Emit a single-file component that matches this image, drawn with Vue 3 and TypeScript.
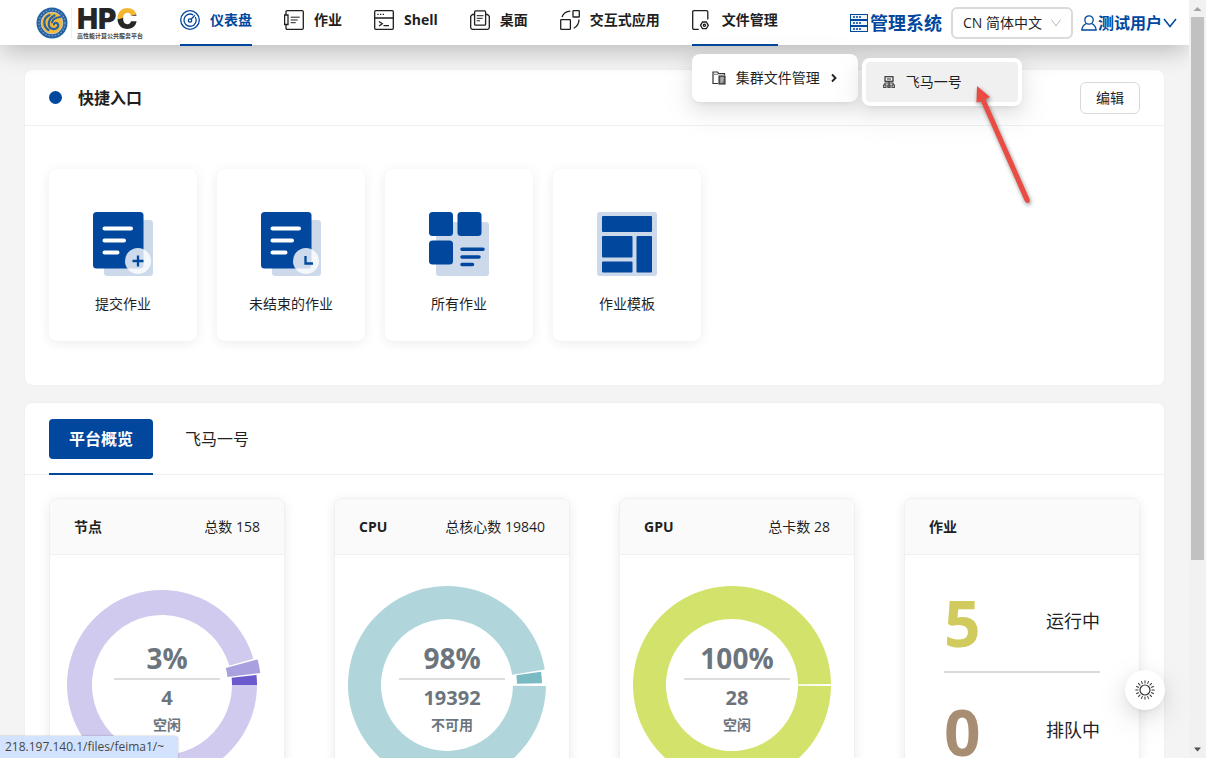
<script setup lang="ts">
import { ref } from 'vue'

interface Slice {
  from: number
  to: number
  inner: number
  outer: number
  color: string
}
interface ResourceCard {
  title: string
  total: string
  percent: string
  count: string
  state: string
  slices: Slice[]
}

const navItems = [
  { key: 'dashboard', label: '仪表盘', active: true },
  { key: 'job', label: '作业', active: false },
  { key: 'shell', label: 'Shell', active: false },
  { key: 'desktop', label: '桌面', active: false },
  { key: 'apps', label: '交互式应用', active: false },
  { key: 'files', label: '文件管理', active: true },
]

const entries = [
  { key: 'submit', label: '提交作业' },
  { key: 'unfinished', label: '未结束的作业' },
  { key: 'all', label: '所有作业' },
  { key: 'template', label: '作业模板' },
]

const resources: ResourceCard[] = [
  {
    title: '节点', total: '总数 158', percent: '3%', count: '4', state: '空闲',
    slices: [
      { from: 0, to: 6, inner: 70, outer: 95, color: '#6a5acd' },
      { from: 7, to: 15, inner: 66, outer: 99, color: '#a9a0e0' },
      { from: 16, to: 360, inner: 70, outer: 95, color: '#d0caee' },
    ],
  },
  {
    title: 'CPU', total: '总核心数 19840', percent: '98%', count: '19392', state: '不可用',
    slices: [
      { from: 1, to: 8, inner: 70, outer: 95, color: '#79bac3' },
      { from: 9, to: 359.4, inner: 66, outer: 99, color: '#b0d6db' },
    ],
  },
  {
    title: 'GPU', total: '总卡数 28', percent: '100%', count: '28', state: '空闲',
    slices: [{ from: 0.6, to: 359.4, inner: 66, outer: 99, color: '#d2e26a' }],
  },
]

const jobStates = [
  { key: 'running', count: 5, label: '运行中' },
  { key: 'pending', count: 0, label: '排队中' },
]

const language = ref('zh')
const activeTab = ref('overview')

const rays = Array.from({ length: 16 }, (_, i) => i * 22.5)

function slicePath(s: Slice): string {
  const cx = 112
  const cy = 100
  const point = (radius: number, degrees: number) => {
    const a = (degrees * Math.PI) / 180
    return `${(cx + radius * Math.cos(a)).toFixed(2)} ${(cy - radius * Math.sin(a)).toFixed(2)}`
  }
  const large = s.to - s.from > 180 ? 1 : 0
  return `M${point(s.outer, s.from)}A${s.outer} ${s.outer} 0 ${large} 0 ${point(s.outer, s.to)}` +
    `L${point(s.inner, s.to)}A${s.inner} ${s.inner} 0 ${large} 1 ${point(s.inner, s.from)}Z`
}
</script>

<template>
  <div class="frame">
    <div class="page">
      <header class="topbar">
        <a class="brand" href="#">
          <svg class="emblem" viewBox="0 0 32 32" aria-hidden="true">
            <circle cx="16" cy="16" r="15.5" fill="#2762a3" />
            <circle cx="16" cy="16" r="13" fill="none" stroke="#7f9fc4" stroke-width="1.2" stroke-dasharray="1.5 1.7" />
            <circle cx="16" cy="16" r="10.900" fill="#f0b93c" stroke="#c9d6df" stroke-width=".7" />
            <g fill="none" stroke="#2762a3" stroke-linecap="round">
              <path d="M13.500 8C7 11 6.500 19 12.500 23" stroke-width="2.200" />
              <path d="M18.500 8.500C11.500 12 11.500 19.500 15.500 21.500C20 23.500 24 19 21.500 16.500C20 15.300 17.800 16 18 17.500" stroke-width="2.200" />
              <path d="M24.500 10C19 10.500 16.500 12.500 16 15.500" stroke-width="1.800" />
            </g>
          </svg>
          <span class="brand-rule"></span>
          <span class="brand-copy">
            <strong class="wordmark">HP<span class="wordmark-c">C</span></strong>
            <small class="tagline">高性能计算公共服务平台</small>
          </span>
        </a>

        <nav class="nav">
          <div v-for="item in navItems" :key="item.key" class="nav-slot">
            <a href="#" class="nav-item" :class="{ underlined: item.active, current: item.key === 'dashboard' }">
              <svg class="nav-icon" viewBox="0 0 20 20" aria-hidden="true">
                <g v-if="item.key === 'dashboard'">
                  <circle cx="10" cy="10" r="9.300" />
                  <path d="M13.200 4.900A6.100 6.100 0 1 0 15.300 7" />
                  <circle cx="10" cy="10.500" r="1.700" />
                  <path d="M11.200 9.200l3.600-4" />
                </g>
                <g v-else-if="item.key === 'job'">
                  <path d="M2 5V2Q2 .7 3.300.7H18Q19.300.7 19.300 2V18Q19.300 19.300 18 19.300H3.300Q2 19.300 2 18V14.500" />
                  <path d="M.6 5H4V14.500H.6Z" />
                  <path d="M6.700 7.200h9M6.700 10h7M6.700 12.700h5" stroke-width="1" />
                </g>
                <g v-else-if="item.key === 'shell'">
                  <rect x=".7" y=".7" width="18.600" height="18.600" rx="1" />
                  <path d="M.7 8h18.600M5 11.500l3.300 2.300L5 16M9.500 15.700H15M3.300 4.300h1.300M6 4.300h1.300M8.700 4.300H10" />
                </g>
                <g v-else-if="item.key === 'desktop'">
                  <rect x="4.600" y=".9" width="11" height="14.300" rx="1" />
                  <path d="M4.600 4.500H2.500L.7 6.300V17.500Q.7 19.300 2.500 19.300H17.500Q19.300 19.300 19.300 17.500V6.300L17.500 4.500H15.600" />
                  <path d="M6.700 5.700h6.800M6.700 8.300h6M6.700 10.800h3.300" stroke-width="1" />
                </g>
                <g v-else-if="item.key === 'apps'">
                  <rect x=".7" y="9.600" width="9.700" height="9.700" rx=".6" />
                  <rect x="13" y=".7" width="6.300" height="6.300" rx=".6" />
                  <path d="M2 7Q4 1.700 10.300 1.200M19 9.500Q19 15.500 13.700 18.300" />
                </g>
                <g v-else>
                  <path d="M6.700 19.300H2Q.7 19.300.7 18V2Q.7.7 2 .7H14.500Q15.800.7 15.800 2V9.500" />
                  <path d="M10.500 12H14.300L16.300 15.300 14.300 18.600H10.500L8.500 15.300Z" />
                  <circle cx="12.400" cy="15.300" r="1.100" />
                </g>
              </svg>
              <span>{{ item.label }}</span>
            </a>

            <template v-if="item.key === 'files'">
              <div class="menu">
                <a href="#" class="menu-item">
                  <svg class="menu-icon" viewBox="0 0 14 14" aria-hidden="true">
                    <path d="M6 12.500H1V1H5.500L6.700 2.700H12.500V4" fill="none" stroke="#333" stroke-width="1.200" />
                    <path d="M1 3.300h5" stroke="#777" />
                    <rect x="7" y="5" width="6" height="8" fill="#777" stroke="#222" />
                    <path d="M8.500 7h3M8.500 9h3M8.500 11h2" stroke="#fff" stroke-width=".8" />
                  </svg>
                  <span>集群文件管理</span>
                  <svg class="menu-arrow" viewBox="0 0 8 10" aria-hidden="true">
                    <path d="M2 1.500L5.500 5 2 8.500" fill="none" stroke="#222" stroke-width="1.900" />
                  </svg>
                </a>
              </div>
              <div class="submenu">
                <a href="#" class="submenu-item">
                  <svg class="submenu-icon" viewBox="0 0 12 12" aria-hidden="true">
                    <g fill="none" stroke="#333">
                      <rect x="2" y=".7" width="8" height="4.600" stroke-width="1.200" />
                      <path d="M4 3h4M6 5.300V11M1.800 9V7H10.200V9" />
                      <rect x=".6" y="9" width="2.400" height="2.400" />
                      <rect x="4.800" y="9" width="2.400" height="2.400" />
                      <rect x="9" y="9" width="2.400" height="2.400" />
                    </g>
                  </svg>
                  <span>飞马一号</span>
                </a>
                <svg class="pointer" viewBox="0 0 64 128" aria-hidden="true">
                  <path d="M6 2L19 13 14.500 15.500 58.500 115Q59.500 119 56.500 119 54.500 118.500 53.500 116.500L10 17.500 5.500 18.500Z" fill="#ea4b42" />
                </svg>
              </div>
            </template>
          </div>
        </nav>

        <div class="tools">
          <a href="#" class="admin">
            <svg class="admin-icon" viewBox="0 0 18 18" aria-hidden="true">
              <g v-for="y in [0, 6, 12]" :key="y" fill="none" stroke="#00479d">
                <rect x=".5" :y="y + 0.5" width="17" height="5" fill="#f2f6fb" />
                <path :d="`M3 ${y + 3}h2M6 ${y + 3}h2M9 ${y + 3}h2`" stroke-width="1.500" />
              </g>
            </svg>
            <span>管理系统</span>
          </a>
          <label class="language">
            <select v-model="language" aria-label="语言">
              <option value="zh">CN 简体中文</option>
              <option value="en">US English</option>
            </select>
            <svg viewBox="0 0 12 10" aria-hidden="true"><path d="M1.500 1.500L6 8l4.500-6.500" fill="none" stroke="#bbb" /></svg>
          </label>
          <button class="user" type="button">
            <svg class="user-icon" viewBox="0 0 16 16" aria-hidden="true">
              <g fill="none" stroke="#00479d" stroke-width="1.300">
                <circle cx="8" cy="5" r="4.200" />
                <path d="M5.500 8.500Q1.500 10 .8 15H15.200Q14.500 10 10.500 8.500" />
              </g>
            </svg>
            <span>测试用户</span>
            <svg class="user-caret" viewBox="0 0 14 14" aria-hidden="true">
              <path d="M1 3l6 7.500L13 3" fill="none" stroke="#00479d" stroke-width="1.500" />
            </svg>
          </button>
        </div>
      </header>

      <main class="content">
        <section class="panel">
          <div class="panel-head">
            <h2><span class="dot"></span>快捷入口</h2>
            <button type="button" class="edit">编辑</button>
          </div>
          <div class="entries">
            <a v-for="entry in entries" :key="entry.key" href="#" class="entry">
              <svg class="entry-icon" viewBox="0 0 60 64" aria-hidden="true">
                <g v-if="entry.key === 'submit' || entry.key === 'unfinished'">
                  <rect x="11" y="8" width="49" height="56" rx="3.500" fill="#ccd9ea" />
                  <rect width="50.500" height="56.500" rx="3.500" fill="#00479d" />
                  <path d="M11.500 16.500h26.500M11.500 28.500h19.500M11.500 40.500h13" stroke="#fff" stroke-width="4" stroke-linecap="round" />
                  <circle cx="45" cy="49" r="13" fill="#fff" fill-opacity=".8" />
                  <path v-if="entry.key === 'submit'" d="M39.500 49h11M45 43.500v11" stroke="#00479d" stroke-width="2.300" />
                  <path v-else d="M44.500 44v7.500H52" fill="none" stroke="#00479d" stroke-width="2.300" />
                </g>
                <g v-else-if="entry.key === 'all'">
                  <rect x="7" y="10" width="53" height="54" rx="3" fill="#ccd9ea" />
                  <g fill="#00479d">
                    <rect width="24" height="24" rx="3.500" />
                    <rect x="28.500" width="24" height="24" rx="3.500" />
                    <rect y="28.500" width="24" height="24" rx="3.500" />
                  </g>
                  <path d="M33 37.200h21M33 44.900h17M33 52.600h10.500" stroke="#00479d" stroke-width="3.500" stroke-linecap="round" />
                </g>
                <g v-else>
                  <rect width="60" height="64" rx="3" fill="#ccd9ea" />
                  <g fill="#00479d">
                    <rect x="5" y="4" width="50" height="16" rx="1" />
                    <rect x="5" y="24" width="30.500" height="21.500" rx="1" />
                    <rect x="39.500" y="24" width="15.500" height="36.500" rx="1" />
                    <rect x="5" y="49.500" width="30.500" height="11" rx="1" />
                  </g>
                </g>
              </svg>
              <span>{{ entry.label }}</span>
            </a>
          </div>
        </section>

        <section class="panel">
          <div class="tabs" role="tablist">
            <button type="button" role="tab" class="tab" :class="{ selected: activeTab === 'overview' }" :aria-selected="activeTab === 'overview'" @click="activeTab = 'overview'">
              <span>平台概览</span>
            </button>
            <button type="button" role="tab" class="tab" :class="{ selected: activeTab === 'feima' }" :aria-selected="activeTab === 'feima'" @click="activeTab = 'feima'">
              <span>飞马一号</span>
            </button>
          </div>

          <div class="stats">
            <article v-for="card in resources" :key="card.title" class="stat">
              <div class="stat-head">
                <h3>{{ card.title }}</h3>
                <span>{{ card.total }}</span>
              </div>
              <div class="chart">
                <svg viewBox="0 0 234 200" aria-hidden="true">
                  <path v-for="slice in card.slices" :key="slice.from" :d="slicePath(slice)" :fill="slice.color" />
                </svg>
                <div class="chart-label">
                  <strong class="percent">{{ card.percent }}</strong>
                  <span class="chart-rule"></span>
                  <strong class="count">{{ card.count }}</strong>
                  <span class="state">{{ card.state }}</span>
                </div>
              </div>
            </article>

            <article class="stat">
              <div class="stat-head"><h3>作业</h3></div>
              <div class="jobs">
                <div v-for="job in jobStates" :key="job.key" class="job-row" :class="job.key">
                  <strong>{{ job.count }}</strong>
                  <span>{{ job.label }}</span>
                </div>
              </div>
            </article>
          </div>
        </section>
      </main>

      <button class="theme" type="button" aria-label="切换主题">
        <svg viewBox="0 0 20 20" aria-hidden="true">
          <g fill="none" stroke="#333">
            <circle cx="10" cy="10" r="5" stroke-width="1.200" />
            <path v-for="angle in rays" :key="angle" d="M10 .4V3.400" :transform="`rotate(${angle} 10 10)`" />
          </g>
        </svg>
      </button>
      <div class="status">218.197.140.1/files/feima1/~</div>
    </div>

    <div class="scrollbar" aria-hidden="true">
      <svg class="scroll-arrow" viewBox="0 0 17 17"><path d="M4.500 11L8.500 7l4 4z" fill="#a3a3a3" /></svg>
      <div class="track"><div class="thumb"></div><div class="rest"></div></div>
      <svg class="scroll-arrow" viewBox="0 0 17 17"><path d="M5 6.500l3.500 4 3.500-4z" fill="#505050" /></svg>
    </div>
  </div>
</template>

<style>
body {
  margin: 0;
  overflow: hidden;
}
</style>

<style scoped>
* {
  box-sizing: border-box;
}
.frame {
  display: flex;
  height: 100vh;
  overflow: hidden;
  background: #f4f4f4;
  color: #1f1f1f;
  font-family: "Open Sans", "Noto Sans CJK SC", sans-serif;
  font-size: 14px;
  line-height: 22px;
}
a {
  color: inherit;
  text-decoration: none;
}
button {
  font: inherit;
  color: inherit;
  border: 0;
  background: none;
  padding: 0;
}
h2,
h3 {
  margin: 0;
}
svg {
  display: block;
  flex: none;
}
.page {
  position: relative;
  flex: 1;
  min-width: 0;
  overflow: hidden;
}

.topbar {
  position: relative;
  z-index: 2;
  display: flex;
  height: 45px;
  padding: 0 12px 0 36px;
  background: #fff;
  box-shadow: 0 8px 24px -2px rgba(0, 0, 0, 0.24);
  white-space: nowrap;
}
.brand {
  display: flex;
  align-items: center;
  width: 144px;
}
.emblem {
  width: 32px;
  height: 32px;
}
.brand-rule {
  width: 1px;
  height: 30px;
  margin: 0 5px 0 3px;
  background: #eee;
}
.brand-copy {
  display: flex;
  flex-direction: column;
}
.wordmark {
  font: 900 28px/26px Inter, "Liberation Sans", sans-serif;
  color: #262626;
}
.wordmark-c {
  background: linear-gradient(165deg, #f2b632 44%, #262626 46%);
  background-clip: text;
  -webkit-background-clip: text;
  color: transparent;
}
.tagline {
  font: bold 6px/8px "Noto Sans CJK SC", sans-serif;
  color: #444;
}
.nav {
  display: flex;
  gap: 32px;
}
.nav-slot {
  position: relative;
}
.nav-item {
  display: flex;
  align-items: center;
  gap: 10px;
  height: 46px;
  padding-bottom: 4px;
  border-bottom: 2px solid transparent;
  font-weight: 700;
}
.nav-item.underlined {
  border-color: #00479d;
}
.nav-item.current {
  color: #00479d;
}
.nav-icon {
  width: 20px;
  height: 20px;
  fill: none;
  stroke: currentColor;
  stroke-width: 1.3;
}
.menu,
.submenu {
  position: absolute;
  background: #fff;
  border-radius: 8px;
  box-shadow: 0 6px 16px rgba(0, 0, 0, 0.08), 0 3px 6px -4px rgba(0, 0, 0, 0.12), 0 9px 28px 8px rgba(0, 0, 0, 0.05);
}
.menu {
  left: 0;
  top: 54px;
}
.menu-item {
  display: flex;
  align-items: center;
  gap: 10px;
  height: 48px;
  padding: 0 20px;
}
.menu-icon {
  width: 14px;
  height: 14px;
}
.menu-arrow {
  width: 8px;
  height: 10px;
}
.submenu {
  left: 170px;
  top: 58px;
  padding: 4px;
}
.submenu-item {
  display: flex;
  align-items: center;
  gap: 11px;
  width: 152px;
  height: 40px;
  padding: 0 17px;
  border-radius: 4px;
  background: #f0f0f0;
}
.submenu-icon {
  width: 12px;
  height: 12px;
}
.pointer {
  position: absolute;
  left: 109px;
  top: 26px;
  width: 64px;
  height: 128px;
  filter: drop-shadow(1px 2px 2px rgba(0, 0, 0, 0.45));
  pointer-events: none;
}
.tools {
  display: flex;
  align-items: center;
  margin-left: auto;
  color: #00479d;
}
.admin {
  display: flex;
  align-items: center;
  gap: 2px;
  margin-right: 9px;
  font-size: 18px;
  font-weight: 700;
}
.admin-icon {
  width: 18px;
  height: 18px;
}
.language {
  display: grid;
  align-items: center;
  margin-right: 8px;
}
.language select,
.language svg {
  grid-area: 1 / 1;
}
.language select {
  appearance: none;
  width: 122px;
  height: 32px;
  padding: 0 24px 0 10px;
  border: 2px solid #dadada;
  border-radius: 6px;
  background: #fff;
  color: #1f1f1f;
  font: inherit;
}
.language svg {
  width: 12px;
  height: 10px;
  margin-right: 11px;
  justify-self: end;
  pointer-events: none;
}
.user {
  display: flex;
  align-items: center;
  gap: 1px;
  font-size: 16px;
  font-weight: 700;
}
.user-icon {
  width: 16px;
  height: 16px;
}
.user-caret {
  width: 14px;
  height: 14px;
}

.content {
  display: flex;
  flex-direction: column;
  gap: 16px;
  padding: 24px 24px 0;
}
.panel {
  border: 1px solid #f0f0f0;
  border-radius: 8px;
  background: #fff;
}
.panel-head {
  display: flex;
  align-items: center;
  justify-content: space-between;
  height: 56px;
  padding: 0 24px;
  border-bottom: 1px solid #f0f0f0;
}
.panel-head h2 {
  display: flex;
  align-items: center;
  gap: 16px;
  font-size: 16px;
}
.dot {
  width: 13px;
  height: 13px;
  border-radius: 50%;
  background: #00479d;
}
.edit {
  width: 60px;
  height: 32px;
  border: 1px solid #d9d9d9;
  border-radius: 6px;
  background: #fff;
}
.entries {
  display: flex;
  flex-wrap: wrap;
  gap: 20px;
  padding: 43px 24px 44px;
}
.entry {
  display: flex;
  flex-direction: column;
  align-items: center;
  gap: 17px;
  width: 148px;
  padding: 43px 8px 26px;
  border-radius: 8px;
  background: #fff;
  box-shadow: 0 2px 12px rgba(0, 0, 0, 0.08);
}
.entry-icon {
  width: 60px;
  height: 64px;
}
.tabs {
  display: flex;
  gap: 32px;
  padding: 16px 24px 0;
  border-bottom: 1px solid #f0f0f0;
}
.tab {
  margin-bottom: -1px;
  padding-bottom: 14px;
  border-bottom: 2px solid transparent;
  font-size: 16px;
}
.tab span {
  display: block;
  line-height: 40px;
}
.tab.selected {
  border-color: #00479d;
  font-weight: 700;
  color: #fff;
}
.tab.selected span {
  padding: 0 20px;
  border-radius: 4px;
  background: #00479d;
}
.stats {
  display: grid;
  grid-template-columns: repeat(4, minmax(0, 1fr));
  gap: 49px;
  padding: 23px 24px 24px;
}
.stat {
  border: 1px solid #f0f0f0;
  border-radius: 8px;
  box-shadow: 0 2px 12px rgba(0, 0, 0, 0.08);
}
.stat-head {
  display: flex;
  align-items: center;
  justify-content: space-between;
  height: 56px;
  padding: 0 24px;
  border-bottom: 1px solid #f0f0f0;
  border-radius: 8px 8px 0 0;
  background: #fafafa;
}
.stat-head h3 {
  font-size: 14px;
}
.chart {
  display: grid;
  padding: 30px 0;
}
.chart > svg,
.chart-label {
  grid-area: 1 / 1;
}
.chart > svg {
  width: 100%;
}
.chart-label {
  display: flex;
  flex-direction: column;
  align-items: center;
  padding-top: 53px;
  color: #6c757d;
}
.percent {
  font-size: 28px;
  line-height: 40px;
}
.chart-rule {
  width: 106px;
  height: 2px;
  background: #ddd;
}
.count {
  font-size: 20px;
  line-height: 36px;
}
.state {
  font-weight: 700;
  line-height: 18px;
}
.jobs {
  display: flex;
  flex-direction: column;
  gap: 6px;
  padding: 16px 39px;
}
.job-row {
  display: flex;
  align-items: center;
  justify-content: space-between;
  height: 102px;
  font-size: 18px;
}
.job-row strong {
  padding-top: 4px;
  font-size: 64px;
  line-height: 64px;
}
.running {
  border-bottom: 2px solid #d9d9d9;
}
.running strong {
  color: #d0cb5c;
}
.pending strong {
  color: #a78e73;
}
.theme {
  position: absolute;
  right: 24px;
  bottom: 48px;
  display: grid;
  place-items: center;
  width: 40px;
  height: 40px;
  border-radius: 50%;
  background: #fff;
  box-shadow: 0 6px 16px rgba(0, 0, 0, 0.08), 0 3px 6px -4px rgba(0, 0, 0, 0.12), 0 9px 28px 8px rgba(0, 0, 0, 0.05);
}
.theme svg {
  width: 20px;
  height: 20px;
}
.status {
  position: absolute;
  left: 0;
  bottom: 0;
  padding: 0 14px 0 5px;
  border-radius: 0 4px 0 0;
  background: #d3e3fd;
  box-shadow: 0 0 2px rgba(0, 0, 0, 0.3);
  color: #474747;
  font-size: 12px;
}

.scrollbar {
  display: flex;
  flex-direction: column;
  width: 17px;
  background: #f1f1f1;
}
.scroll-arrow {
  width: 17px;
  height: 17px;
}
.track {
  display: flex;
  flex: 1;
  flex-direction: column;
  padding: 0 2px;
}
.thumb {
  flex: 3;
  background: #c1c1c1;
}
.rest {
  flex: 1;
}
</style>
